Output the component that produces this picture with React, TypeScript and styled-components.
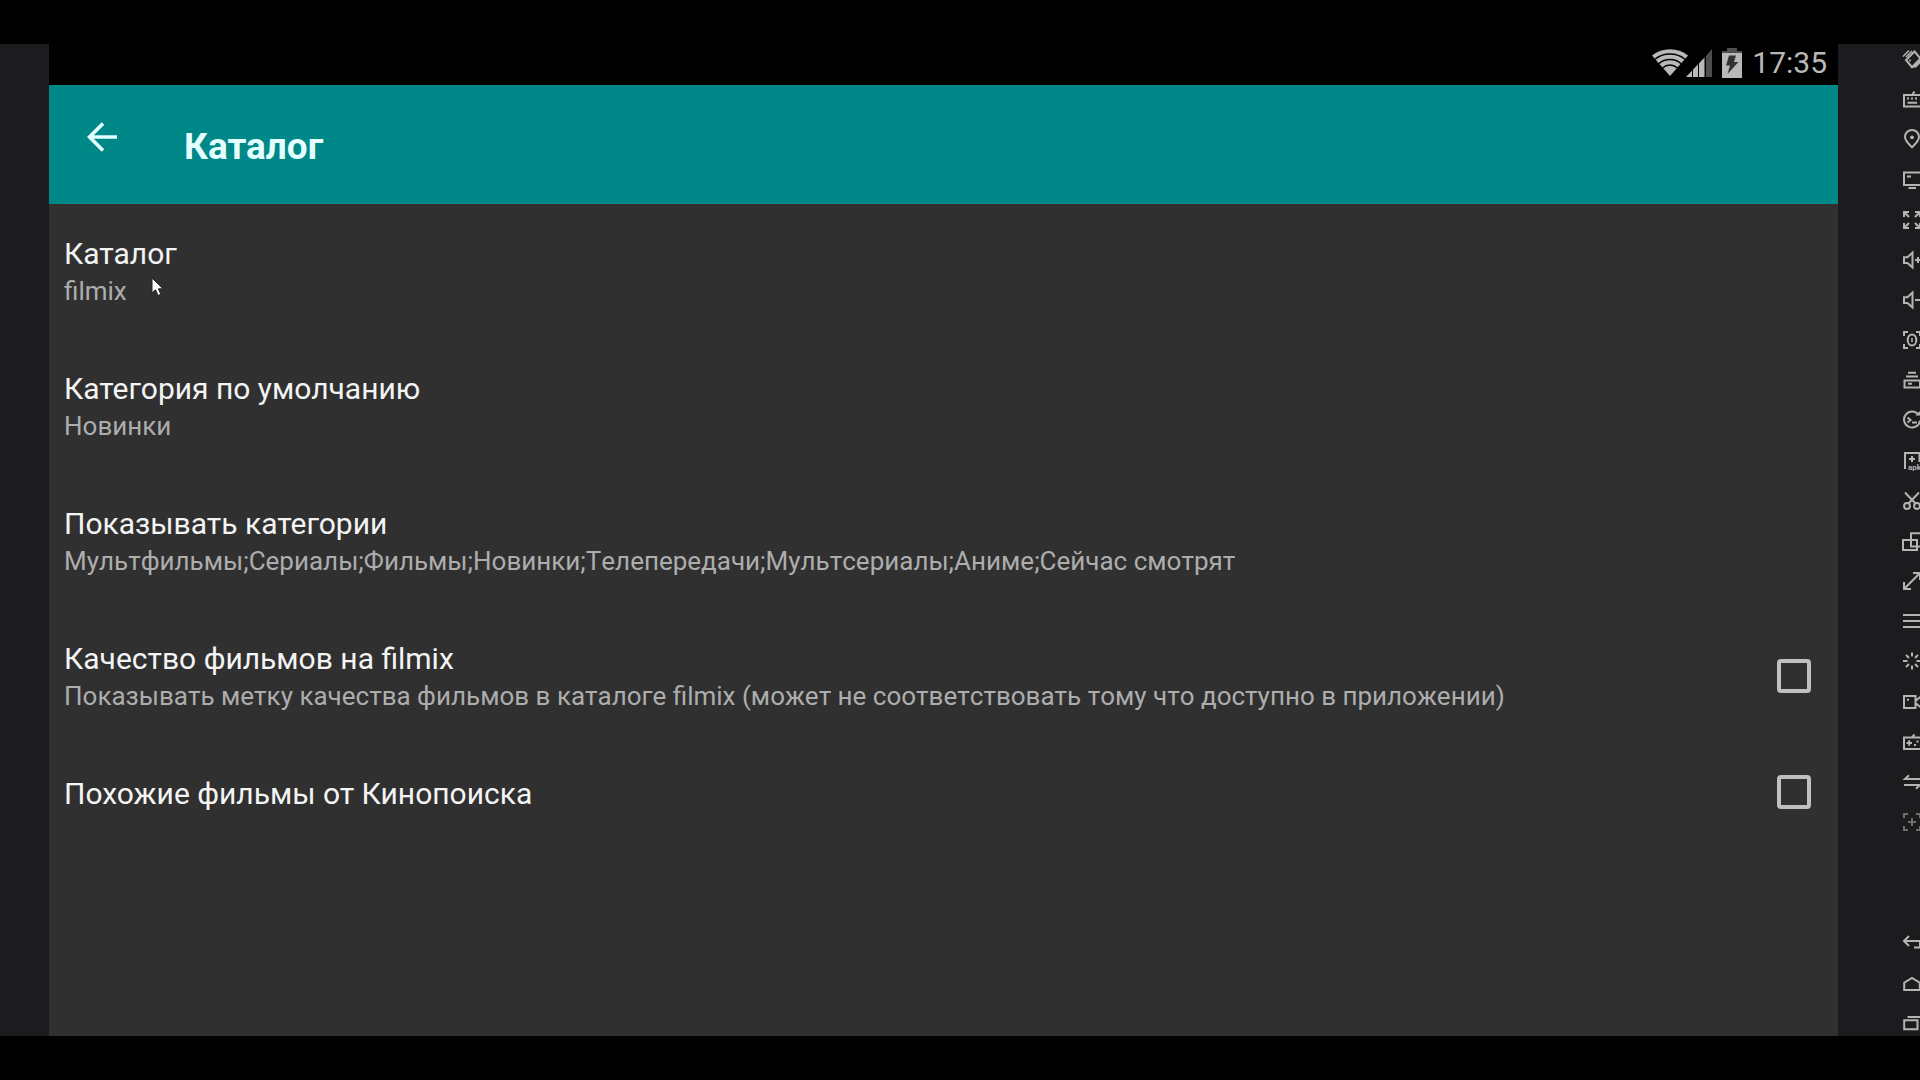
import React from "react";
import styled, { createGlobalStyle } from "styled-components";

const GlobalStyle = createGlobalStyle`
  * { box-sizing: border-box; }
  body {
    margin: 0;
    background: #000;
    font-family: Roboto, "Noto Sans", sans-serif;
    overflow-x: hidden;
  }
`;

const Page = styled.div`
  display: flex;
  min-height: 100vh;
  padding: 44px 0;
  background: #000;
`;

const Gutter = styled.div`
  flex: 0 0 49px;
  background: #1c1c1e;
`;

const Screen = styled.main`
  flex: 1;
  min-width: 0;
  display: flex;
  flex-direction: column;
  position: relative;
  background: #303030;
`;

const StatusBar = styled.div`
  display: flex;
  align-items: center;
  justify-content: flex-end;
  height: 41px;
  padding: 0 11px 4px;
  background: #000;
  color: #b9b9b9;
  font-size: 30px;
  line-height: 36px;
`;

const StatusIcon = styled.svg<{ $gap: number }>`
  flex: none;
  margin-right: ${(p) => p.$gap}px;
`;

const Header = styled.header`
  display: flex;
  align-items: flex-start;
  height: 119px;
  padding: 28px 29px 0;
  background: #008787;
  color: #e4ffff;
`;

const BackButton = styled.button`
  display: flex;
  align-items: center;
  justify-content: center;
  width: 48px;
  height: 48px;
  margin-right: 58px;
  padding: 0;
  border: 0;
  background: none;
  color: inherit;
`;

const HeaderTitle = styled.h1`
  margin: 0;
  padding-top: 12px;
  font-size: 37px;
  line-height: 44px;
  font-weight: 700;
`;

const List = styled.div`
  display: flex;
  flex-direction: column;
  padding-top: 1px;
`;

const rowStyle = `
  display: flex;
  align-items: center;
  justify-content: space-between;
  width: 100%;
  padding: 30px 27px 30px 15px;
  border: 0;
  background: none;
  font-family: inherit;
  text-align: left;
`;

const RowButton = styled.button`
  ${rowStyle}
`;

const RowLabel = styled.label`
  ${rowStyle}
`;

const RowText = styled.span`
  display: flex;
  flex-direction: column;
`;

const RowTitle = styled.span`
  font-size: 30px;
  line-height: 38px;
  color: #f4f4f4;
`;

const RowSummary = styled.span`
  font-size: 26px;
  line-height: 37px;
  font-kerning: none;
  color: #adadad;
`;

const Checkbox = styled.input`
  appearance: none;
  flex: none;
  width: 34px;
  height: 34px;
  margin: 0 0 4px;
  border: 4px solid #c0c0c0;
  border-radius: 4px;
  &:checked { background: #008787; }
`;

const Cursor = styled.svg`
  position: absolute;
  left: 102px;
  top: 233px;
  pointer-events: none;
`;

const Rail = styled.aside`
  flex: 0 0 82px;
  display: grid;
  grid-template-rows: repeat(25, 24px);
  align-content: space-between;
  padding: 3px 0 1px 65px;
  overflow: hidden;
  background: #1c1c1e;
`;

const RailButton = styled.button<{ $row: number; $dim?: boolean }>`
  grid-row: ${(p) => p.$row};
  display: flex;
  align-items: center;
  width: 20px;
  height: 24px;
  padding: 0;
  border: 0;
  background: none;
  color: ${(p) => (p.$dim ? "#6c6c6d" : "#b4b4b4")};
`;

const RailGlyph = styled.svg`
  flex: none;
  overflow: visible;
  fill: none;
  stroke: currentColor;
  stroke-width: 2;
`;

const GlyphText = styled.text`
  font: 700 8px Roboto, sans-serif;
  fill: currentColor;
  stroke: none;
`;

type Tool = { name: string; row: number; dim?: boolean; art: React.ReactNode };

const speaker = <path d="M1 7.3H4.5L9.5 2.5V17.5L4.5 13H1Z" />;
const corners = <path d="M1 6V2H5M13 2H17V6M17 14V18H13M5 18H1V14" />;

const tools: Tool[] = [
  { name: "Повернуть", row: 1, art: <><path d="M11.5 2.5L3 11L9 18.2L17.5 9.5Z" /><path d="M0 7.5L6 1.5M3 8L9 2M12 18.5L19 11.5M10 18.5L17 11.5" strokeWidth="1.5" /><circle cx="7" cy="11.5" r="1" fill="currentColor" stroke="none" /></> },
  { name: "Клавиатура", row: 2, art: <><path d="M1 6H18V17.5H1ZM9 6L11.5 2.5M4.5 13.7H14" /><path d="M4 9.5H6M8 9.5H10M12 9.5H14" /></> },
  { name: "Местоположение", row: 3, art: <><path d="M9 18.3C5 14.5 2 11.5 2 8A7 7 0 0 1 16 8C16 11.5 13 14.5 9 18.3Z" /><circle cx="9" cy="8.3" r="1.9" fill="currentColor" stroke="none" /></> },
  { name: "Экран", row: 4, art: <path d="M1 3.5H18V16H1ZM5.5 19H13M4 7.5H8" /> },
  { name: "Во весь экран", row: 5, art: <path d="M1 7V2H6M1.5 2.5L6 7M12 2H17V7M16.5 2.5L12 7M17 13V18H12M16.5 17.5L12 13M6 18H1V13M1.5 17.5L6 13" /> },
  { name: "Громче", row: 6, art: <>{speaker}<path d="M12 10H18M15 7V13" /></> },
  { name: "Тише", row: 7, art: <>{speaker}<path d="M12 10H18" /></> },
  { name: "Снимок экрана", row: 8, art: <>{corners}<ellipse cx="9" cy="10" rx="4.3" ry="5.6" /><path d="M9 8V12" strokeWidth="1.5" /></> },
  { name: "Установка", row: 9, art: <path d="M5 2.8H13M3 6.4H15M1.5 10.5H17V17.5H1.5ZM5 13.7H9" /> },
  { name: "Выполнить команду", row: 10, art: <><path d="M15.5 4.8A8 8 0 1 0 17 10.5M4.5 7.5L7.5 10L4.5 12.5M9 12.5H14" /><path d="M12.5 5.5H17V1Z" fill="currentColor" stroke="none" /></> },
  { name: "Установить APK", row: 11, art: <><path d="M2 18V2H16.5V11M9 5V11M6 8H12" /><GlyphText x="5" y="18.5">apk</GlyphText></> },
  { name: "Вырезать", row: 12, art: <><circle cx="4" cy="15" r="2.9" /><circle cx="14" cy="15" r="2.9" /><path d="M2 1.5L12.5 12.5M16 1.5L5.5 12.5" /></> },
  { name: "Окна", row: 13, art: <path d="M0 9H14V19H0ZM8 2.3H19V15.5H8Z" /> },
  { name: "Размер", row: 14, art: <path d="M1 18L17 2M1 11V18H8M10 2H17V9" /> },
  { name: "Меню", row: 15, art: <path d="M0 4H18M0 10H18M0 16H18" /> },
  { name: "Встряхнуть", row: 16, art: <path d="M9 1.5V5.5M9 14.5V18.5M0 10H4.5M13.5 10H18M3 4L6 7M12 13L15 16M15 4L12 7M6 13L3 16" /> },
  { name: "Запись", row: 17, art: <path d="M1 4H12.5V16H1ZM12.5 9L18 4.5V15.5L12.5 11M4 7.7H6" /> },
  { name: "Геймпад", row: 18, art: <path d="M1 5.5H18V17H1ZM9 5.5L11.5 2.5M3.5 11H9M6.2 8.3V13.7M11 13H13M13.5 9.5H15.5" /> },
  { name: "Обмен", row: 19, art: <path d="M18 7H2L6 3.3M1 13H17L13 16.7" /> },
  { name: "Сканировать", row: 20, dim: true, art: <>{corners}<path d="M5 10H13M9 6V14" /></> },
  { name: "Системная кнопка назад", row: 23, art: <path d="M6 4L1 9L6 14M1 9H17V15.5H11" /> },
  { name: "Домой", row: 24, art: <path d="M1.2 17V9.7L9 5L16.8 9.7V17Z" /> },
  { name: "Недавние", row: 25, art: <path d="M1.2 7.3H14.5V16.3H1.2ZM4.5 4H18V12.5" /> },
];

type Setting = { title: string; summary?: string; checkable?: boolean };

const settings: Setting[] = [
  { title: "Каталог", summary: "filmix" },
  { title: "Категория по умолчанию", summary: "Новинки" },
  { title: "Показывать категории", summary: "Мультфильмы;Сериалы;Фильмы;Новинки;Телепередачи;Мультсериалы;Аниме;Сейчас смотрят" },
  { title: "Качество фильмов на filmix", summary: "Показывать метку качества фильмов в каталоге filmix (может не соответствовать тому что доступно в приложении)", checkable: true },
  { title: "Похожие фильмы от Кинопоиска", checkable: true },
];

function SettingRow({ title, summary, checkable }: Setting) {
  const text = (
    <RowText>
      <RowTitle>{title}</RowTitle>
      {summary && <RowSummary>{summary}</RowSummary>}
    </RowText>
  );
  return checkable ? (
    <RowLabel>{text}<Checkbox type="checkbox" /></RowLabel>
  ) : (
    <RowButton type="button">{text}</RowButton>
  );
}

function Status() {
  return (
    <StatusBar>
      <StatusIcon $gap={-2} width="36" height="28" viewBox="0 0 36 28" aria-label="Wi-Fi">
        <path d="M18 27L0 6.5C10 -1.8 26 -1.8 36 6.5Z" fill="#b9b9b9" />
        <path d="M3 10.3C11 3.2 25 3.2 33 10.3M6.8 14.7C13 9 23 9 29.2 14.7M10.5 19C15 15 21 15 25.5 19" fill="none" stroke="#000" strokeWidth="1.5" />
      </StatusIcon>
      <StatusIcon $gap={10} width="26" height="28" viewBox="0 0 26 28" aria-label="Сигнал">
        <path d="M0 28L19 8V28Z" fill="#b9b9b9" />
        <path d="M20 7L26 0V28H20Z" fill="#4d4d4d" />
        <path d="M6.5 18V28M12.5 12V28M19 6V28" stroke="#000" strokeWidth="1" />
      </StatusIcon>
      <StatusIcon $gap={10} width="20" height="30" viewBox="0 0 20 30" aria-label="Зарядка">
        <path d="M5 0H15V3H20V6H0V3H5Z" fill="#505050" />
        <path d="M0 5H20V30H0Z" fill="#b9b9b9" />
        <path d="M7 7.5H14L12 14H16.5L5.5 26L8 17.5H4Z" fill="#333" />
      </StatusIcon>
      <span>17:35</span>
    </StatusBar>
  );
}

export default function App() {
  return (
    <>
      <GlobalStyle />
      <Page>
        <Gutter />
        <Screen>
          <Status />
          <Header>
            <BackButton type="button" aria-label="Назад">
              <svg width="30" height="30" viewBox="0 0 30 30" fill="none" stroke="currentColor" strokeWidth="3.6">
                <path d="M30 15H3M16 1.5L2.5 15L16 28.5" />
              </svg>
            </BackButton>
            <HeaderTitle>Каталог</HeaderTitle>
          </Header>
          <List>
            {settings.map((s) => <SettingRow key={s.title} {...s} />)}
          </List>
          <Cursor width="14" height="20" viewBox="0 0 14 20" aria-hidden="true">
            <path d="M1 1V16L4.5 12.8L7 18.5L9.8 17.3L7.4 11.8H12Z" fill="#fff" stroke="#222" strokeWidth="1" />
          </Cursor>
        </Screen>
        <Rail>
          {tools.map((t) => (
            <RailButton key={t.name} type="button" aria-label={t.name} $row={t.row} $dim={t.dim}>
              <RailGlyph width="20" height="20" viewBox="0 0 20 20">{t.art}</RailGlyph>
            </RailButton>
          ))}
        </Rail>
      </Page>
    </>
  );
}
